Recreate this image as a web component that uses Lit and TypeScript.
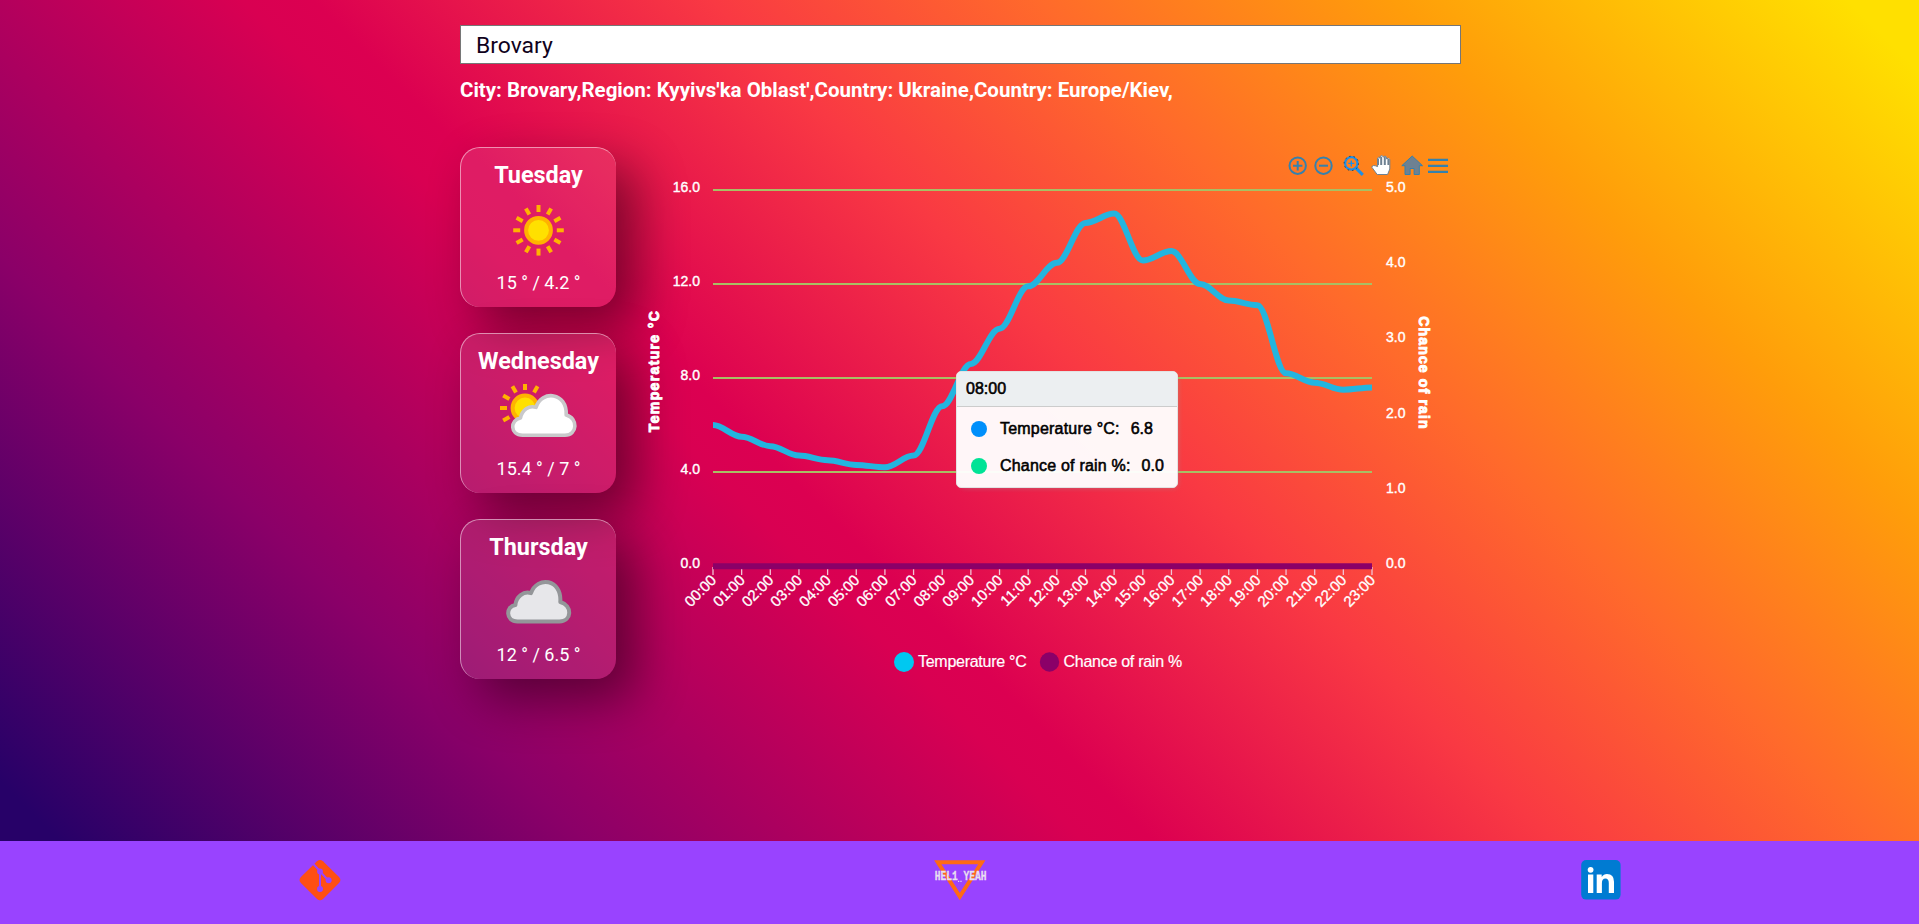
import { LitElement, html, svg, css } from "lit";
import { customElement, property } from "lit/decorators.js";

interface Day {
  name: string;
  icon: "sun" | "partly" | "cloud";
  temps: string;
}

const DAYS: Day[] = [
  { name: "Tuesday", icon: "sun", temps: "15 ° / 4.2 °" },
  { name: "Wednesday", icon: "partly", temps: "15.4 ° / 7 °" },
  { name: "Thursday", icon: "cloud", temps: "12 ° / 6.5 °" },
];

const HOURLY = [
  6, 5.5, 5.1, 4.7, 4.5, 4.3, 4.2, 4.7, 6.8, 8.6, 10.1, 11.9, 12.9, 14.6, 15,
  13, 13.4, 12, 11.3, 11.1, 8.2, 7.8, 7.5, 7.6,
];

@customElement("weather-icon")
class WeatherIcon extends LitElement {
  @property() kind = "sun";

  static styles = css`
    :host { display: block; width: 78px; height: 64px; }
    svg { display: block; }
  `;

  rays(cx: number, cy: number, from: number, to: number, angles: number[]) {
    return angles.map((a) => {
      const r = (a * Math.PI) / 180;
      return svg`<line x1=${cx + Math.cos(r) * from} y1=${cy + Math.sin(r) * from}
        x2=${cx + Math.cos(r) * to} y2=${cy + Math.sin(r) * to}
        stroke="#ffb300" stroke-width="4"/>`;
    });
  }

  render() {
    const all = Array.from({ length: 12 }, (_, i) => i * 30);
    if (this.kind === "sun") {
      return html`<svg width="78" height="64" viewBox="0 0 78 64">
        ${this.rays(38.5, 32.3, 18.3, 25.3, all)}
        <circle cx="38.5" cy="32.3" r="12.4" fill="#ffe000" stroke="#ffb300" stroke-width="4" />
      </svg>`;
    }
    if (this.kind === "partly") {
      return html`<svg width="78" height="64" viewBox="0 0 78 64">
        ${this.rays(25, 24, 18, 25.2, [150, 180, 210, 240, 270, 300])}
        <circle cx="25" cy="24" r="12.4" fill="#ffe000" stroke="#ffb300" stroke-width="4" />
        <path d="M22.5 51.2 C9.6 51.2 10 35.5 20.5 34 C22 26 29 21 36 23.4 C41.5 5.6 67.5 8 66.2 31 C78.4 34 77.6 51.2 65 51.2 Z"
          fill="#fff" stroke="#c9c9cb" stroke-width="3.6" stroke-linejoin="round" />
      </svg>`;
    }
    return html`<svg width="78" height="64" viewBox="0 0 78 64">
      <path d="M17.5 51.4 C5.3 51.4 5.6 36.2 15.4 35 C16 26.6 23.6 20.8 31 23.2 C37 5.6 62 8.8 60.3 32 C72.6 35.6 72 51.4 59.5 51.4 Z"
        fill="#e7e7ea" stroke="#949699" stroke-width="4" stroke-linejoin="round" />
    </svg>`;
  }
}

@customElement("day-card")
class DayCard extends LitElement {
  @property({ attribute: false }) day!: Day;

  static styles = css`
    :host {
      box-sizing: border-box;
      display: flex;
      flex-direction: column;
      align-items: center;
      width: 156px;
      height: 160px;
      padding-top: 13px;
      border-radius: 20px;
      border-top: 1px solid rgba(255, 255, 255, 0.5);
      border-left: 1px solid rgba(255, 255, 255, 0.5);
      background: rgba(255, 255, 255, 0.11);
      box-shadow: 20px 20px 50px rgba(0, 0, 0, 0.45);
      color: #fff;
    }
    .name { font-size: 23.4px; font-weight: 700; line-height: 28px; }
    .icon { margin: 9px 0 10px; }
    .temps { font-size: 18px; line-height: 22px; }
  `;

  render() {
    return html`
      <div class="name">${this.day.name}</div>
      <weather-icon class="icon" kind=${this.day.icon}></weather-icon>
      <div class="temps">${this.day.temps}</div>
    `;
  }
}

@customElement("forecast-chart")
class ForecastChart extends LitElement {
  static styles = css`
    :host { display: block; position: relative; width: 821px; height: 540px; }
    svg { display: block; font-family: "Liberation Sans", Arial, sans-serif; }
    .axis { font-size: 14px; fill: #fff; stroke: #fff; stroke-width: 0.4px; }
    .hour { font-size: 15px; fill: #fff; stroke: #fff; stroke-width: 0.3px; }
    .title { font-size: 14px; font-weight: 700; letter-spacing: 1.35px; fill: #fff; stroke: #fff; stroke-width: 0.9px; }
    .title.right { letter-spacing: 1.15px; }
    .legend { font-size: 16px; letter-spacing: -0.27px; fill: #fff; stroke: #fff; stroke-width: 0.2px; }
    .tooltip {
      box-sizing: border-box;
      position: absolute;
      left: 316px;
      top: 224px;
      width: 222px;
      height: 117px;
      overflow: hidden;
      border: 1px solid #e3e3e3;
      border-radius: 5px;
      background: rgba(255, 255, 255, 0.96);
      box-shadow: 2px 2px 6px -4px #999;
      color: #000;
      font: 16px "Liberation Sans", Arial, sans-serif;
      -webkit-text-stroke: 0.55px #000;
    }
    .heading {
      height: 34px;
      padding-left: 9px;
      line-height: 33px;
      background: #eceff1;
      border-bottom: 1px solid #ccc;
    }
    .row { display: flex; align-items: center; height: 38px; padding-left: 13.5px; }
    .row.first { padding-top: 3px; height: 37px; }
    .dot { width: 16px; height: 16px; border-radius: 50%; margin-right: 13.5px; }
    .dot.blue { background: #008ffb; }
    .dot.green { background: #00e396; }
    .label { letter-spacing: 0.2px; }
    .value { margin-left: 11px; }
  `;

  x(i: number) { return 73 + (i * 659) / 23; }
  y(v: number) { return 419 - v * 23.5; }

  curve() {
    const k = (659 / 23) * 0.35;
    return HOURLY.map((v, i) =>
      i === 0
        ? `M${this.x(0)} ${this.y(v)}`
        : `C${this.x(i - 1) + k} ${this.y(HOURLY[i - 1])} ${this.x(i) - k} ${this.y(v)} ${this.x(i)} ${this.y(v)}`
    ).join(" ");
  }

  toolbar() {
    return svg`
      <g fill="none" stroke="#3581ad" stroke-width="2">
        <circle cx="657.7" cy="18.7" r="8.2"/><path d="M653 18.7h9.4M657.7 14v9.4"/>
        <circle cx="683.5" cy="18.7" r="8.2"/><path d="M679 18.7h9"/>
        <g stroke="#1c8fe8" stroke-width="2.2">
          <circle cx="711.3" cy="16.4" r="6.2"/>
          <path d="M716 21.2l6.8 6.6" stroke-width="3"/>
          <path d="M708.3 16.4h6M711.3 13.4v6" stroke-width="1.4"/>
        </g>
        <path d="M788 12.8h20M788 18.8h20M788 24.8h20" stroke-width="2.2"/>
      </g>
      <circle cx="711.3" cy="16.4" r="7.2" fill="none" stroke="#17324a" stroke-width="0.8" stroke-dasharray="1.5 3"/>
      <path d="M772.2 9l10.3 9.7h-3.2v8.8h-5.2v-6h-4v6h-5.1v-8.8h-3.2z" fill="#6e8192" stroke="#3581ad" stroke-width="1"/>
      <path d="M737.2 27.5 L731.8 20.2 Q732.4 17.2 737.6 19.6 V11.2 Q738.5 9.2 740 11.2 V9.6 Q741.6 7.6 743.3 9.6 V10 Q745 8 746.6 10 V12 Q748.6 10 749.8 12.4 V22 L747.6 27.5 Z" fill="#fff" stroke="#6e8192" stroke-width="1"/>
      <path d="M738 18V11.4M741.2 18V9.8M744.8 18V9.8M748.4 18V12" stroke="#6e8192" stroke-width="2" fill="none"/>
    `;
  }

  render() {
    return html`
      <svg width="821" height="540" viewBox="0 0 821 540">
        ${[16, 12, 8, 4].map((v) => svg`
          <line x1="73" x2="732" y1=${this.y(v)} y2=${this.y(v)} stroke="#a8bf64" stroke-width="1.8"/>`)}
        ${[16, 12, 8, 4, 0].map((v) => svg`
          <text class="axis" text-anchor="end" x="60" y=${this.y(v) + 2}>${v.toFixed(1)}</text>`)}
        ${[5, 4, 3, 2, 1, 0].map((v) => svg`
          <text class="axis" x="746" y=${421 - v * 75.2}>${v.toFixed(1)}</text>`)}
        ${HOURLY.map((_, i) => svg`
          <line x1=${this.x(i)} x2=${this.x(i)} y1="420" y2="428" stroke="#f3c3d4" stroke-width="1.3"/>
          <text class="hour" text-anchor="end" x=${this.x(i) + 1} y="435.5"
            transform=${`rotate(-45 ${this.x(i) + 1} 431)`}>${String(i).padStart(2, "0")}:00</text>`)}
        <path d=${this.curve()} fill="none" stroke="#23b5df" stroke-width="6"/>
        <line x1="73" x2="732" y1="419.3" y2="419.3" stroke="#8b0068" stroke-width="6"/>
        <text class="title" text-anchor="middle" transform="translate(19 224) rotate(-90)">Temperature °C</text>
        <text class="title right" text-anchor="middle" transform="translate(779 226) rotate(90)">Chance of rain</text>
        <circle cx="264" cy="515" r="10" fill="#00c8f0"/>
        <text class="legend" x="278" y="520">Temperature °C</text>
        <circle cx="409.5" cy="515" r="9.7" fill="#8b0068"/>
        <text class="legend" x="423.5" y="520">Chance of rain %</text>
        ${this.toolbar()}
      </svg>
      <div class="tooltip">
        <div class="heading">08:00</div>
        <div class="row first"><span class="dot blue"></span><span class="label">Temperature °C:</span><span class="value">6.8</span></div>
        <div class="row"><span class="dot green"></span><span class="label">Chance of rain %:</span><span class="value">0.0</span></div>
      </div>
    `;
  }
}

@customElement("app-footer")
class AppFooter extends LitElement {
  static styles = css`
    :host {
      display: grid;
      grid-template-columns: 640px 640px 1fr;
      justify-items: center;
      height: 83px;
      padding-top: 18px;
      box-sizing: border-box;
      background: #9943ff;
    }
    .word { font: 700 12px "Liberation Mono", monospace; fill: #e8dff0; stroke: #e8dff0; stroke-width: 0.3px; }
    .linked { margin-left: 3px; }
  `;

  render() {
    return html`
      <svg width="44" height="44" viewBox="0 0 44 44">
        <path d="M19 2.2Q22 -.4 25 2.2L41 18Q43.8 21 41 24L25 40Q22 42.6 19 40L2.9 24Q.2 21 2.9 18Z" fill="#ff4f12"/>
        <path d="M15.4 5l6.6 7.2V30M22 12.5l8 8.5" stroke="#9943ff" stroke-width="2" fill="none"/>
        <g fill="#9943ff"><circle cx="22" cy="12.4" r="2.9"/><circle cx="30.6" cy="21.3" r="3"/><circle cx="22" cy="30" r="3"/></g>
      </svg>
      <svg width="80" height="44" viewBox="-10 0 80 44">
        <path d="M7.8 3.3H51.8L29.8 37.5Z" fill="none" stroke="#ff6a14" stroke-width="4"/>
        <text class="word" transform="translate(4.8 21) scale(0.8 1)">HEL1 YEAH</text>
        <path d="M28 22.3h1.2M30.4 22.3h1.2" stroke="#e8dff0" stroke-width="1.2"/>
      </svg>
      <svg class="linked" width="44" height="44" viewBox="0 0 44 44">
        <rect x="2.2" y="1" width="39.4" height="39.6" rx="5" fill="#007bd2"/>
        <g fill="#fff">
          <circle cx="11.6" cy="10.8" r="2.9"/>
          <path d="M9 15.6h5.3v18.3h-5.3zM17.7 15.6h5v2.5Q24.6 15 28 15Q35 15 35 22.8V33.9h-5.2V24Q29.8 19.4 26.4 19.4Q22.9 19.4 22.9 24V33.9h-5.2z"/>
        </g>
      </svg>
    `;
  }
}

@customElement("app-root")
class AppRoot extends LitElement {
  static styles = css`
    :host {
      display: flex;
      flex-direction: column;
      height: 100vh;
      overflow: hidden;
      font-family: Roboto, sans-serif;
      background: linear-gradient(45deg, #270168 5%, #8b0068 23.5%, #d90052 41%, #dc0051 43.5%, #f93943 57.5%, #ff6a2b 69%, #ff9d0a 81.5%, #ffe000 97.5%);
    }
    main { flex: 1; width: 1001px; margin: 0 auto; padding: 25px 0 0 2px; box-sizing: content-box; }
    .search {
      display: block;
      box-sizing: border-box;
      width: 1001px;
      height: 39px;
      padding: 1px 15px 0;
      border: 1px solid #767676;
      border-radius: 0;
      outline: none;
      background: #fff;
      color: #10021c;
      font: 22.9px Roboto, sans-serif;
    }
    .place { margin: 13px 0 0; font-size: 20.5px; font-weight: 700; line-height: 26px; color: #fff; white-space: nowrap; }
    .content { display: flex; gap: 24px; margin-top: 44px; }
    .days { display: flex; flex-direction: column; gap: 26px; }
  `;

  render() {
    return html`
      <main>
        <input class="search" .value=${"Brovary"} />
        <h2 class="place">City: Brovary,Region: Kyyivs'ka Oblast',Country: Ukraine,Country: Europe/Kiev,</h2>
        <div class="content">
          <div class="days">${DAYS.map((d) => html`<day-card .day=${d}></day-card>`)}</div>
          <forecast-chart></forecast-chart>
        </div>
      </main>
      <app-footer></app-footer>
    `;
  }
}
